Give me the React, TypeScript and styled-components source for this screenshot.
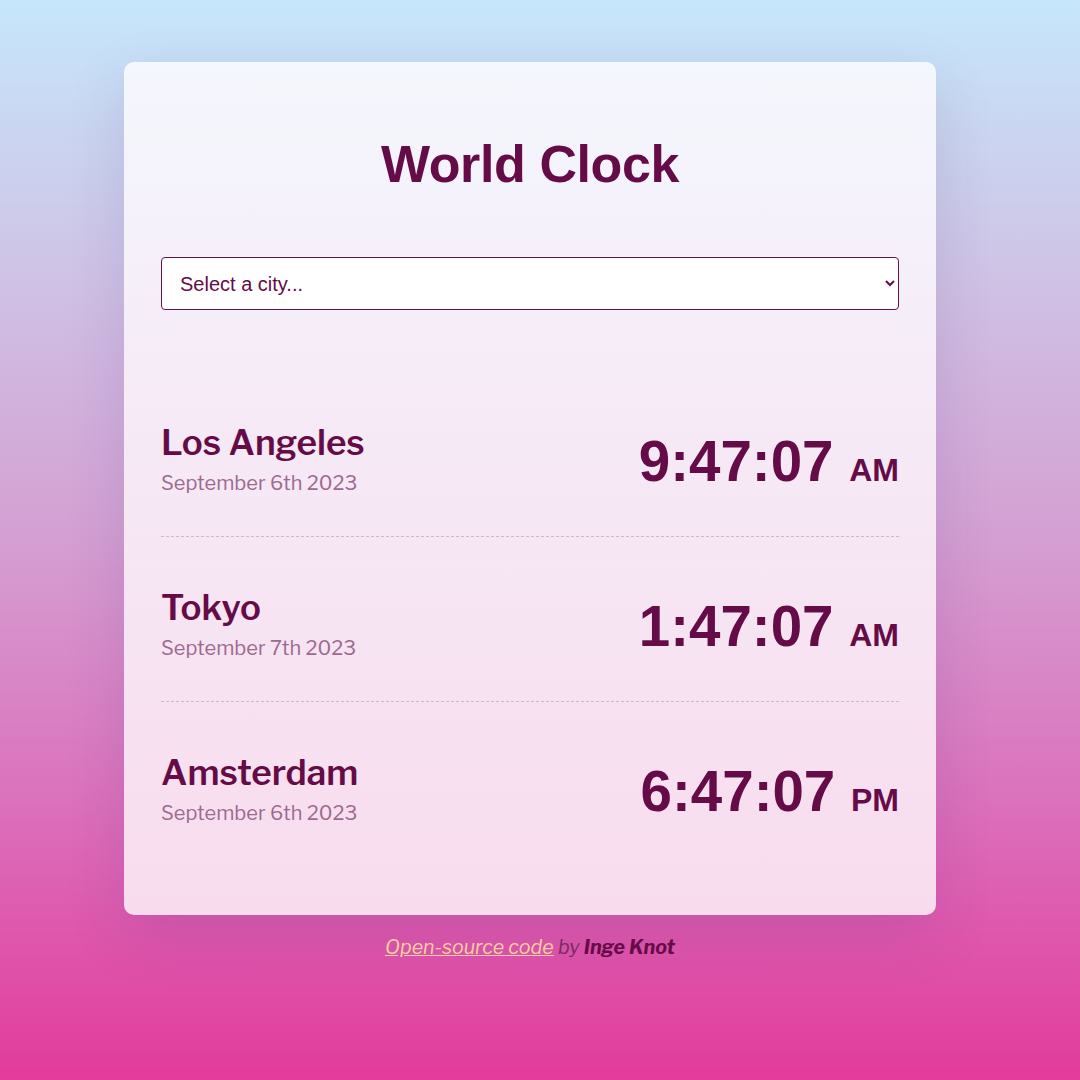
import React from "react";
import styled, { createGlobalStyle } from "styled-components";

const Global = createGlobalStyle`
  html, body { margin: 0; padding: 0; }
  body {
    min-height: 100vh;
    background: linear-gradient(180deg, #c6e7fb 0%, #cfc3e6 25%, #d49fd2 50%, #dc6fbb 75%, #e23b9c 100%);
    font-family: "Libre Franklin", "Open Sans", "Liberation Sans", sans-serif;
  }
`;

const Page = styled.div`
  min-height: 1080px;
  box-sizing: border-box;
  padding: 62px 20px 0 0;
  display: flex;
  flex-direction: column;
  align-items: center;
`;

const Card = styled.main`
  width: 812px;
  box-sizing: border-box;
  padding: 71px 37px 49px;
  border-radius: 10px;
  background: linear-gradient(180deg, #f4f7fd 0%, #f6e9f6 45%, #f8dcee 100%);
  box-shadow: 0 20px 60px rgba(60, 40, 120, 0.14);
`;

const Title = styled.h1`
  margin: 0;
  font-family: "Liberation Sans", Arial, sans-serif;
  font-weight: 700;
  font-size: 52px;
  line-height: 62px;
  text-align: center;
  color: #650b47;
  letter-spacing: -0.4px;
`;

const Select = styled.select`
  display: block;
  width: 100%;
  height: 53px;
  margin-top: 62px;
  padding: 0 12px 0 14px;
  border: 1px solid #6a1049;
  border-radius: 4px;
  background: #ffffff;
  color: #650b47;
  font-family: "Liberation Sans", Arial, sans-serif;
  font-size: 20px;
`;

const List = styled.div`
  margin-top: 62px;
  display: flex;
  flex-direction: column;
`;

const Row = styled.div`
  height: 165px;
  box-sizing: border-box;
  padding-top: 14px;
  display: flex;
  align-items: center;
  justify-content: space-between;
  border-bottom: 1px dashed #d2b7c8;
  &:last-child { border-bottom: none; height: 164px; }
`;

const CityBlock = styled.div`
  display: flex;
  flex-direction: column;
`;

const CityName = styled.div`
  font-size: 35px;
  font-weight: 600;
  line-height: 44px;
  color: #650b47;
`;

const CityDate = styled.div`
  font-size: 20px;
  line-height: 36px;
  color: #9d6a8f;
`;

const Time = styled.div`
  font-family: "Liberation Sans", Arial, sans-serif;
  font-weight: 700;
  font-size: 56.5px;
  color: #650b47;
  white-space: nowrap;
`;

const Meridiem = styled.small`
  font-size: 32px;
`;

const Footer = styled.footer`
  margin-top: 20px;
  font-size: 19.6px;
  font-style: italic;
  color: #7a2a5e;
  text-align: center;
`;

const Link = styled.a`
  color: #fcd0a0;
  text-decoration: underline;
`;

const Author = styled.strong`
  color: #650b47;
  font-weight: 700;
`;

const cities = [
  { name: "Los Angeles", date: "September 6th 2023", time: "9:47:07", ampm: "AM" },
  { name: "Tokyo", date: "September 7th 2023", time: "1:47:07", ampm: "AM" },
  { name: "Amsterdam", date: "September 6th 2023", time: "6:47:07", ampm: "PM" },
];

export default function App() {
  return (
    <>
      <Global />
      <Page>
        <Card>
          <Title>World Clock</Title>
          <Select defaultValue="">
            <option value="">Select a city...</option>
            <option value="current">My current location</option>
            <option value="paris">Paris</option>
            <option value="sydney">Sydney</option>
          </Select>
          <List>
            {cities.map((c) => (
              <Row key={c.name}>
                <CityBlock>
                  <CityName>{c.name}</CityName>
                  <CityDate>{c.date}</CityDate>
                </CityBlock>
                <Time>
                  {c.time} <Meridiem>{c.ampm}</Meridiem>
                </Time>
              </Row>
            ))}
          </List>
        </Card>
        <Footer>
          <Link href="#">Open-source code</Link> by <Author>Inge Knot</Author>
        </Footer>
      </Page>
    </>
  );
}
